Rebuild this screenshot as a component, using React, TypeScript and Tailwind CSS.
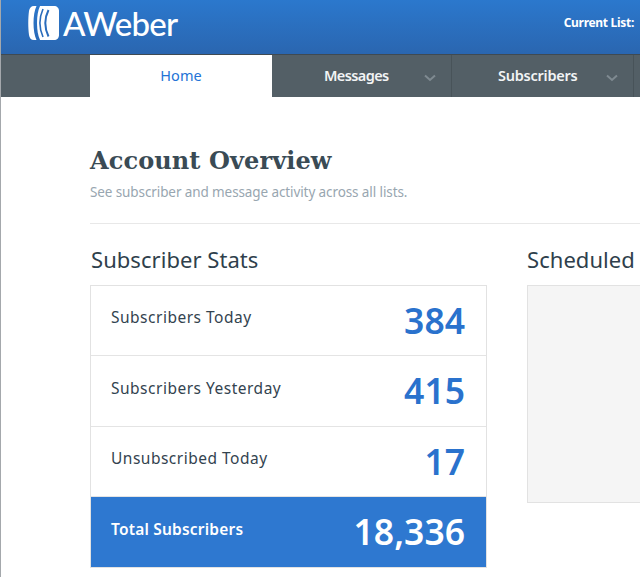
import React from "react";

const sans = "font-['Noto_Sans','Open_Sans',sans-serif]";

function Chevron() {
  return (
    <svg width="14" height="8" viewBox="0 0 14 8" fill="none" stroke="#7f8a91" strokeWidth="2">
      <path d="M2 1.5 L7 6 L12 1.5" />
    </svg>
  );
}

function Logo() {
  return (
    <svg width="32" height="36" viewBox="0 0 32 36" className="shrink-0">
      <path d="M6 1 H8.5 C4.5 9 4.5 27 8.5 35 H6 C3 35 1.5 33 1 30 C0 23 0 13 1 6 C1.5 3 3 1 6 1 Z" fill="#fff" />
      <path d="M12 1 H26 C29 1 31 3 31 6 V30 C31 33 29 35 26 35 H12 C8 27 8 9 12 1 Z" fill="#fff" />
      <path d="M15 4 C11 13 11 23 15 32" fill="none" stroke="#2a6cbc" strokeWidth="1.6" />
      <path d="M20.5 5 C16.5 13 16.5 23 20.5 31.5" fill="none" stroke="#2a6cbc" strokeWidth="2" />
    </svg>
  );
}

function NavItem({ label, textClass, widthClass }: { label: string; textClass: string; widthClass: string }) {
  return (
    <div className={`relative flex shrink-0 items-center border-r border-[#485359] h-full ${widthClass}`}>
      <span className={`font-semibold text-[14.5px] text-[#f2f4f5] ${textClass}`}>{label}</span>
      <span className="absolute right-[14px] top-[19px] flex">
        <Chevron />
      </span>
    </div>
  );
}

function Row({ label, value, heightClass }: { label: string; value: string; heightClass: string }) {
  return (
    <div className={`flex items-center justify-between border-b border-[#e4e4e4] bg-white pl-5 pr-[21px] ${heightClass}`}>
      <span className="text-[15.5px] tracking-[0.5px] text-[#33434f] -mt-[5px]">{label}</span>
      <span className="text-[35.5px] font-semibold leading-none text-[#2a72cd]">{value}</span>
    </div>
  );
}

export default function App() {
  return (
    <div className={`w-[640px] h-[577px] overflow-hidden bg-white border-l border-[#a4a8ac] ${sans}`}>
      <header className="flex h-[54px] items-center justify-between bg-gradient-to-b from-[#2b78cd] to-[#2a66b0] pl-[27px] pr-[6px]">
        <div className="flex items-center gap-[3px] -mt-[22px] pt-[14px]">
          <Logo />
          <span className="font-['Lato',sans-serif] text-[33px] leading-none font-medium text-white tracking-[-0.8px]">AWeber</span>
        </div>
        <span className="text-[12px] font-bold text-white tracking-[-0.3px] -mt-[8px]">Current List:</span>
      </header>
      <nav className="flex h-[43px] border-t border-[#3f4a52] bg-[#535f66] pl-[89px]">
        <div className="flex h-full w-[182px] shrink-0 items-center justify-center bg-white text-[14.5px] tracking-[0.1px] text-[#2373d6]">
          Home
        </div>
        <NavItem label="Messages" textClass="ml-[52px] tracking-[-0.6px]" widthClass="w-[180px]" />
        <NavItem label="Subscribers" textClass="ml-[46px] tracking-[-0.25px]" widthClass="w-[182px]" />
      </nav>
      <main className="pl-[89px] pt-[45px]">
        <h1 className="font-['DejaVu_Serif',serif] text-[24px] leading-[38px] font-bold tracking-[0.1px] text-[#3a4b55]">
          Account Overview
        </h1>
        <p className="mt-[2px] text-[13.5px] leading-[20px] tracking-[-0.1px] text-[#98a6b0]">
          See subscriber and message activity across all lists.
        </p>
        <hr className="mt-[21px] border-t border-[#e8e8e8]" />
        <div className="mt-[19px] flex gap-[40px]">
          <section className="w-[397px] shrink-0">
            <h2 className="text-[22px] leading-[32px] tracking-[0.05px] text-[#2f3f4c] pl-px">Subscriber Stats</h2>
            <div className="mt-[10px] border border-[#e2e2e2]">
              <Row label="Subscribers Today" value="384" heightClass="h-[70px]" />
              <Row label="Subscribers Yesterday" value="415" heightClass="h-[71px]" />
              <Row label="Unsubscribed Today" value="17" heightClass="h-[70px]" />
              <div className="flex h-[70px] items-center justify-between bg-[#2e78d0] pl-5 pr-[21px] text-white">
                <span className="text-[15.5px] font-semibold tracking-[0.2px] -mt-[5px]">Total Subscribers</span>
                <span className="text-[35.5px] font-semibold leading-none">18,336</span>
              </div>
            </div>
          </section>
          <section className="w-[300px] shrink-0">
            <h2 className="text-[22px] leading-[32px] tracking-[0.05px] text-[#2f3f4c]">Scheduled</h2>
            <div className="mt-[10px] h-[218px] border border-[#e2e2e2] bg-[#f5f5f5]" />
          </section>
        </div>
      </main>
    </div>
  );
}
